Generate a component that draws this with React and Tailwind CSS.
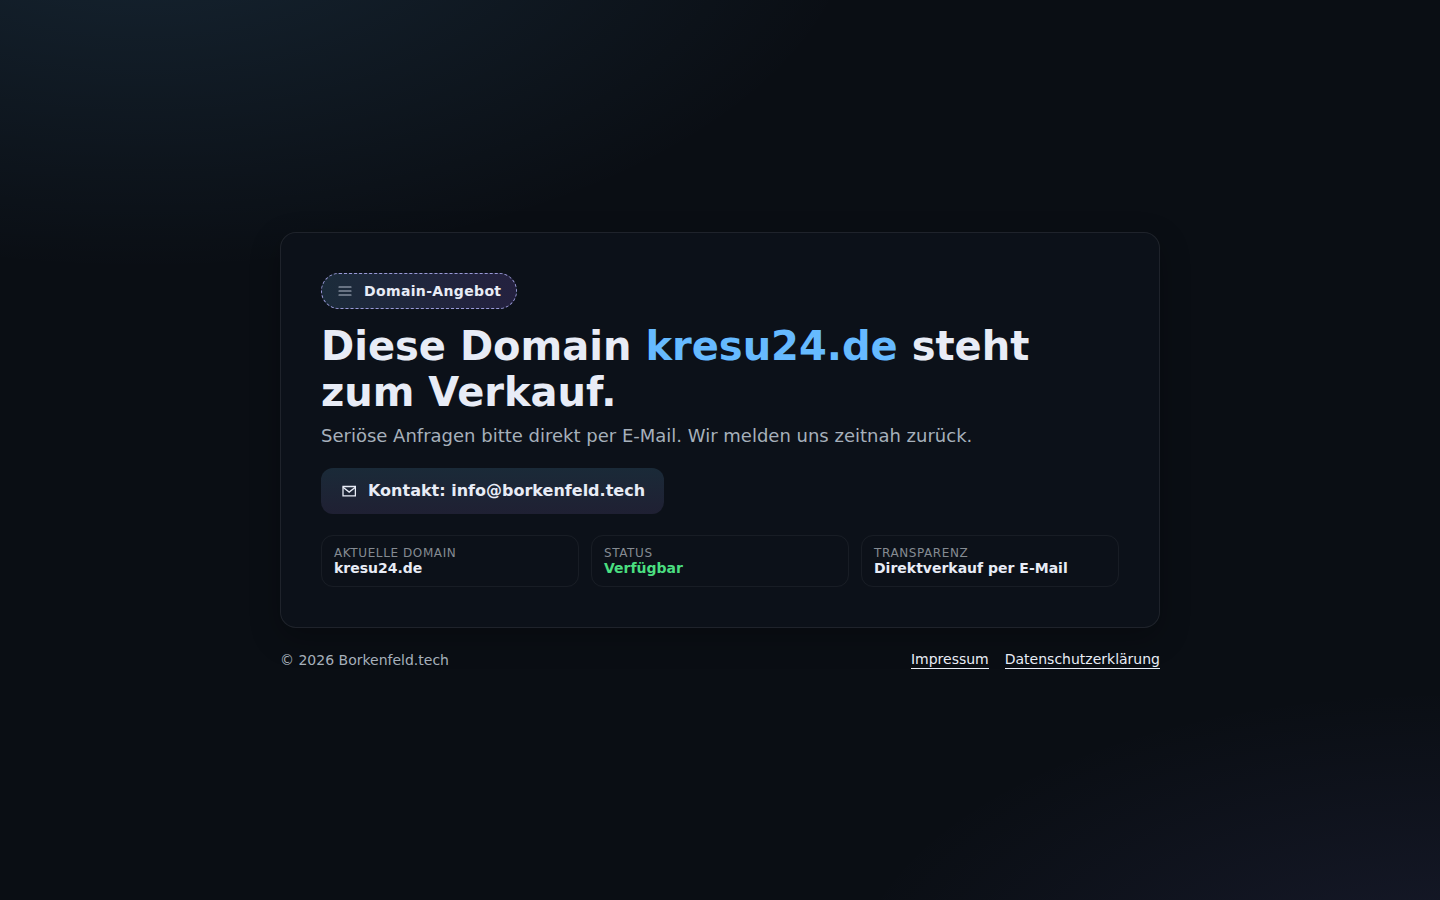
const facts = [
  { label: 'Aktuelle Domain', value: 'kresu24.de' },
  { label: 'Status', value: 'Verfügbar', available: true },
  { label: 'Transparenz', value: 'Direktverkauf per E-Mail' },
]

function MenuIcon() {
  return (
    <svg width="16" height="16" viewBox="0 0 16 16" fill="none" stroke="#b4bccb" strokeWidth="1.2" strokeLinecap="round" aria-hidden="true">
      <path d="M2 4h12M2 8h12M2 12h12" />
    </svg>
  )
}

function MailIcon() {
  return (
    <svg width="18" height="18" viewBox="0 0 24 24" fill="none" stroke="currentColor" strokeWidth="1.7" aria-hidden="true">
      <path d="M4 6h16.500v12.500H4z" />
      <path d="m4 7 8.250 6.500L20.500 7" />
    </svg>
  )
}

export default function App() {
  return (
    <div className="flex min-h-screen flex-col items-center justify-center bg-[#0a0e14] bg-[radial-gradient(1200px_600px_at_10%_-10%,rgba(102,192,255,0.13),transparent_60%),radial-gradient(1000px_500px_at_100%_110%,rgba(139,135,250,0.10),transparent_60%)] px-6 pt-[34px] pb-8 font-['DejaVu_Sans',sans-serif] text-[#e8ecf6]">
      <div className="w-full max-w-[880px]">
        <main className="rounded-2xl border border-white/8 bg-[#0c1119] p-10 shadow-[0_10px_30px_rgba(0,0,0,0.25)]">
          {/* Badge */}
          <div className="inline-flex h-9 items-center gap-[11px] rounded-full border border-dashed border-[#9a9ad8] bg-linear-to-r from-[#1b2b3a] to-[#24213f] px-[15px] text-sm font-bold tracking-wide">
            <MenuIcon />
            Domain-Angebot
          </div>

          <h1 className="mt-[14px] text-[40px] leading-[46px] font-bold">
            Diese Domain <span className="text-[#66baff]">kresu24.de</span> steht zum Verkauf.
          </h1>
          <p className="mt-[7px] text-lg leading-7 text-[#a6b0bb]">
            Seriöse Anfragen bitte direkt per E-Mail. Wir melden uns zeitnah zurück.
          </p>

          <a
            href="mailto:info@borkenfeld.tech"
            className="mt-[18px] inline-flex h-[46px] items-center gap-[10px] rounded-xl bg-linear-to-b from-[#1a2a38] to-[#1f2033] px-[19px] font-bold"
          >
            <MailIcon />
            Kontakt: info@borkenfeld.tech
          </a>

          {/* Facts */}
          <dl className="mt-[21px] grid grid-cols-1 gap-3 sm:grid-cols-3">
            {facts.map((fact) => (
              <div key={fact.label} className="rounded-xl border border-white/5 px-3 py-[10px]">
                <dt className="text-xs leading-[14px] tracking-wider text-[#858b92] uppercase">{fact.label}</dt>
                <dd className={`text-sm leading-4 font-bold ${fact.available ? 'text-[#4ade80]' : ''}`}>{fact.value}</dd>
              </div>
            ))}
          </dl>
        </main>

        <footer className="mt-[22px] flex flex-wrap items-center justify-between gap-4 text-sm text-[#a6b0bb]">
          <span>© 2026 Borkenfeld.tech</span>
          <nav className="flex gap-4 text-[#e8ecf6]">
            <a href="/impressum" className="border-b border-current leading-[17px]">Impressum</a>
            <a href="/datenschutz" className="border-b border-current leading-[17px]">Datenschutzerklärung</a>
          </nav>
        </footer>
      </div>
    </div>
  )
}
